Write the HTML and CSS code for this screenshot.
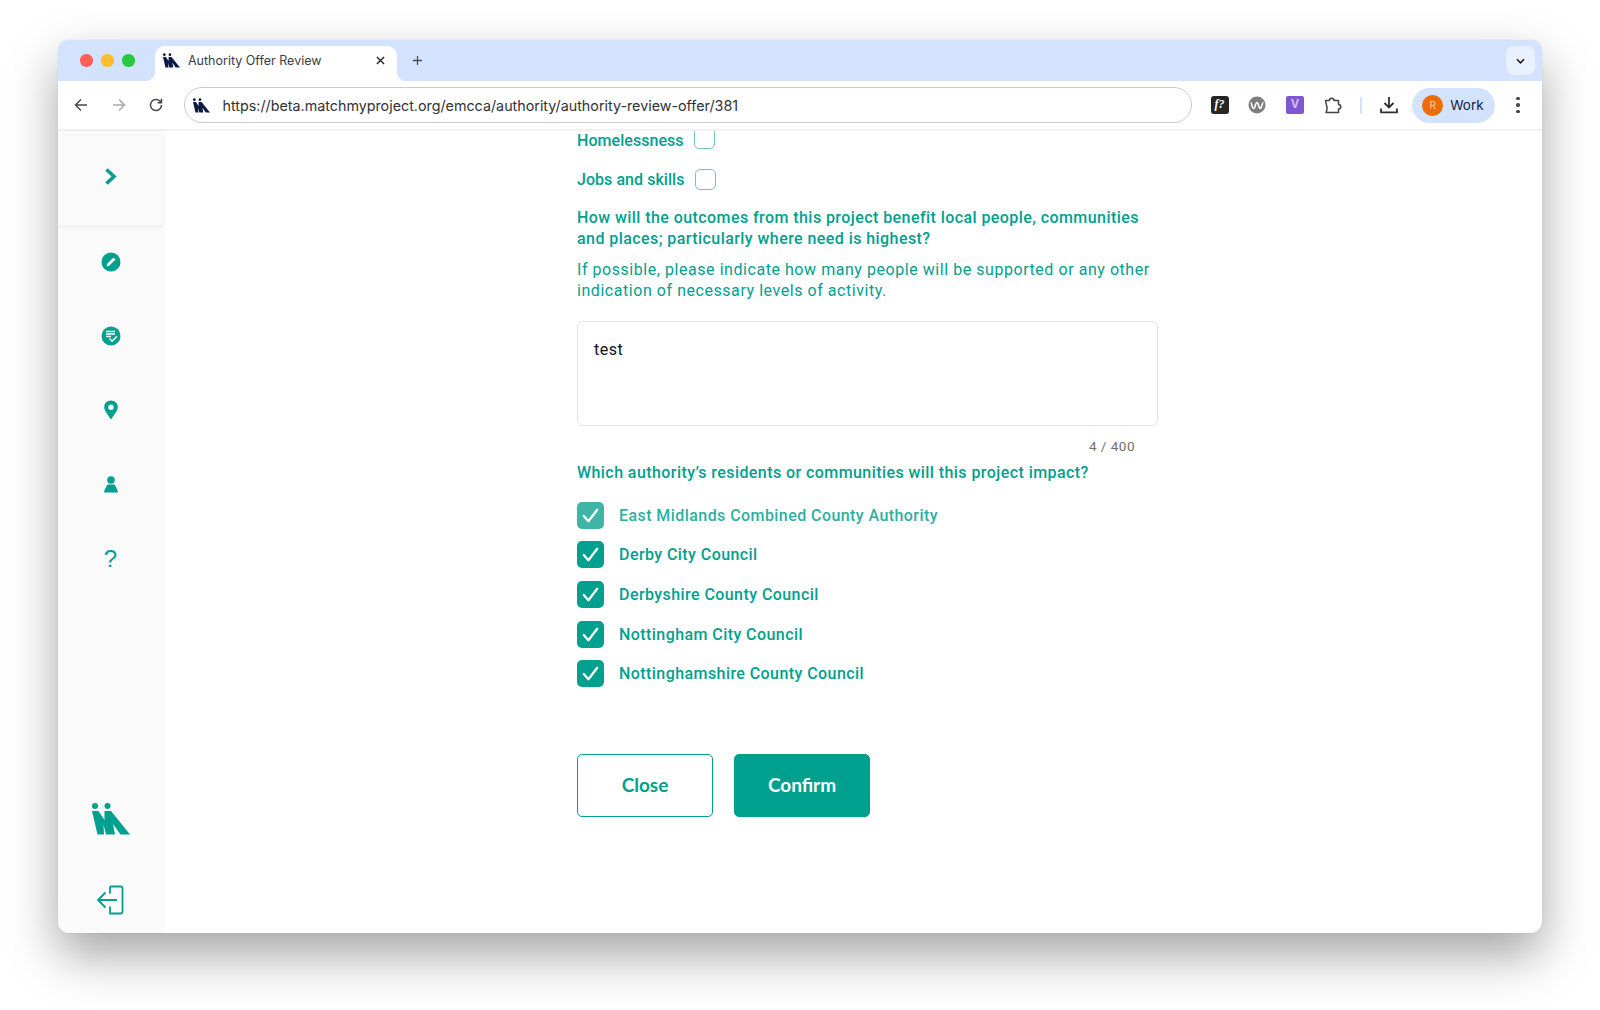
FILE: index.html
```html
<!DOCTYPE html>
<html lang="en">
<head>
<meta charset="utf-8">
<title>Authority Offer Review</title>
<link rel="stylesheet" href="styles.css">
</head>
<body>
<svg class="defs" aria-hidden="true"><defs>
<symbol id="logo" viewBox="0 0 38 32">
<circle cx="3" cy="3" r="3"/><circle cx="15.500" cy="3" r="3"/>
<path d="M0 8h6.500l6 9V8H19l19 23.500h-9.500L21 21l2 10.500h-9l-2.500-10 .5 10H5.500z"/>
</symbol>
<symbol id="check" viewBox="0 0 26 26"><path d="M6.500 13.500l4.500 5 8.500-11" fill="none" stroke="#fff" stroke-width="2.200" stroke-linecap="round" stroke-linejoin="round"/></symbol>
</defs></svg>
<div class="window">
  <header class="tabbar">
    <div class="lights"><i class="red"></i><i class="yellow"></i><i class="green"></i></div>
    <div class="tab">
      <svg class="fav"><use href="#logo"/></svg>
      <span class="tab-title">Authority Offer Review</span>
      <svg class="tab-x" viewBox="0 0 10 10"><path d="M1 1l8 8M9 1l-8 8"/></svg>
    </div>
    <svg class="plus" viewBox="0 0 12 12"><path d="M6 1v10M1 6h10"/></svg>
    <div class="tab-menu"><svg viewBox="0 0 10 6"><path d="M1 1l4 4 4-4"/></svg></div>
  </header>
  <nav class="toolbar">
    <svg class="nav" viewBox="0 0 16 16"><path d="M14 8H2.500M8 2.500L2.500 8 8 13.500"/></svg>
    <svg class="nav off" viewBox="0 0 16 16"><path d="M2 8h11.500M8 2.500L13.500 8 8 13.500"/></svg>
    <svg class="nav" viewBox="0 0 16 16"><path d="M13.500 8A5.500 5.500 0 1 1 11.700 3.900L13.500 5.500M13.500 1.800v3.900H9.600"/></svg>
    <div class="omnibox">
      <svg class="fav"><use href="#logo"/></svg>
      <span class="url">https://beta.matchmyproject.org/emcca/authority/authority-review-offer/381</span>
    </div>
    <div class="ext ext-f">f?</div>
    <svg class="ext" viewBox="0 0 18 18"><circle cx="9" cy="9" r="8.500" fill="#7d7d7d"/><path d="M2.500 6.500c1.500 0 1.500 6 3.200 6s1.500-6 3.300-6 1.500 6 3.300 6 1.500-6 3.200-6" fill="none" stroke="#fff" stroke-width="1.600"/></svg>
    <div class="ext ext-v">V</div>
    <svg class="ext" viewBox="0 0 18 18"><path d="M1.500 4.500h4c0-3 4.500-3 4.500 0h4.500v4c3 0 3 4.500 0 4.500v3.500H2c1-1.500 1-3 1-4.500 0-2-1-4-1.500-7.500z" fill="none" stroke="#444" stroke-width="1.500" stroke-linejoin="round"/></svg>
    <span class="divider"></span>
    <svg class="ext dl" viewBox="0 0 18 18"><path d="M9 1v10M4.500 7L9 11.500 13.500 7" fill="none" stroke="#2f2f33" stroke-width="1.800"/><path d="M1 12.500v3.800h16v-3.800" fill="none" stroke="#2f2f33" stroke-width="1.800" stroke-linejoin="round"/></svg>
    <div class="profile"><span class="avatar">R</span><span class="work">Work</span></div>
    <div class="dots"><i></i><i></i><i></i></div>
  </nav>
  <div class="page">
    <aside class="sidebar">
      <div class="side-top">
        <svg class="chev" viewBox="0 0 12 17"><path d="M1.500 1.500l7.500 7-7.500 7" fill="none" stroke="#00a08e" stroke-width="3.600"/></svg>
      </div>
      <div class="side-icons">
        <svg class="si" viewBox="0 0 20 20"><circle cx="10" cy="10" r="9.500"/><path d="M5.500 14.500l1-3 6-6 2 2-6 6z" fill="#fff"/></svg>
        <svg class="si" viewBox="0 0 20 20"><circle cx="10" cy="10" r="9.500"/><path d="M5 5.500h9M5 8h9M5 10.500h5" stroke="#fff" stroke-width="1.300"/><path d="M8.500 12.500l2.500 2.700 5-5" fill="none" stroke="#fff" stroke-width="1.600"/></svg>
        <svg class="si" viewBox="0 0 20 20"><path fill-rule="evenodd" d="M10 0.500c3.800 0 6.800 2.900 6.800 6.500 0 3.500-3.500 7.500-6.800 12.500C6.700 14.500 3.200 10.500 3.200 7c0-3.600 3-6.500 6.800-6.500zm0 4a2.700 2.700 0 1 0 0 5.400 2.700 2.700 0 0 0 0-5.400z"/></svg>
        <svg class="si" viewBox="0 0 20 20"><circle cx="10" cy="6" r="3.800"/><path d="M7 10.500h6l1 .5 2.800 6v1.500H3.200V17L6 11z"/></svg>
        <span class="help">?</span>
      </div>
      <div class="side-bottom">
        <svg class="side-logo"><use href="#logo"/></svg>
        <svg class="exit" viewBox="0 0 30 30"><path d="M14 1.500h10.500a2 2 0 0 1 2 2v23a2 2 0 0 1-2 2H14v-7M14 8.500v-7M21 15H2M9.500 7.500L2 15l7.500 7.500" fill="none" stroke="#00a08e" stroke-width="1.800"/></svg>
      </div>
    </aside>
    <main class="main">
      <div class="form">
        <div class="inline-row first"><span class="q">Homelessness</span><span class="box"></span></div>
        <div class="inline-row"><span class="q">Jobs and skills</span><span class="box"></span></div>
        <p class="q para">How will the outcomes from this project benefit local people, communities and places; particularly where need is highest?</p>
        <p class="hint">If possible, please indicate how many people will be supported or any other indication of necessary levels of activity.</p>
        <div class="textarea">test</div>
        <div class="counter">4 / 400</div>
        <p class="q which">Which authority’s residents or communities will this project impact?</p>
        <ul class="checks">
          <li class="faded"><span class="cb"><svg><use href="#check"/></svg></span><span class="q">East Midlands Combined County Authority</span></li>
          <li><span class="cb"><svg><use href="#check"/></svg></span><span class="q">Derby City Council</span></li>
          <li><span class="cb"><svg><use href="#check"/></svg></span><span class="q">Derbyshire County Council</span></li>
          <li><span class="cb"><svg><use href="#check"/></svg></span><span class="q">Nottingham City Council</span></li>
          <li><span class="cb"><svg><use href="#check"/></svg></span><span class="q">Nottinghamshire County Council</span></li>
        </ul>
        <div class="actions">
          <button class="btn ghost" type="button">Close</button>
          <button class="btn solid" type="button">Confirm</button>
        </div>
      </div>
    </main>
  </div>
</div>
</body>
</html>
```
FILE: styles.css
```css
* { box-sizing: border-box; }
html, body { margin: 0; height: 100%; }
body {
  background: #fff;
  padding: 40px 58px 0;
  font-family: Roboto, "Liberation Sans", sans-serif;
  overflow: hidden;
}
.defs { width: 0; height: 0; position: absolute; }
.window {
  width: 1484px;
  height: 893px;
  border-radius: 11px;
  overflow: hidden;
  background: #fff;
  box-shadow: 0 0 1px rgba(0,0,0,.25), 0 22px 50px rgba(0,0,0,.36);
  display: flex;
  flex-direction: column;
}
.tabbar {
  height: 41px;
  flex: none;
  background: #d3e3fd;
  display: flex;
  align-items: flex-end;
  padding-left: 22px;
  position: relative;
}
.lights { display: flex; gap: 8.500px; align-self: center; width: 75px; }
.lights i { width: 12.500px; height: 12.500px; border-radius: 50%; display: block; }
.red { background: #ff5f57; }
.yellow { background: #febc2e; }
.green { background: #28c840; }
.tab {
  width: 242px;
  height: 35px;
  background: #fff;
  border-radius: 10px 10px 0 0;
  display: flex;
  align-items: center;
  padding: 0 0 6px 8px;
  position: relative;
}
.tab::before, .tab::after {
  content: "";
  position: absolute;
  bottom: 0;
  width: 10px;
  height: 10px;
}
.tab::before { left: -10px; background: radial-gradient(circle at 0 0, #d3e3fd 10px, #fff 10.500px); }
.tab::after { right: -10px; background: radial-gradient(circle at 100% 0, #d3e3fd 10px, #fff 10.500px); }
.fav { width: 17px; height: 15px; fill: #0c1a45; flex: none; }
.tab-title { font: 12.500px "Inter", "Liberation Sans", sans-serif; color: #3a3d42; margin-left: 8px; flex: 1; }
.tab-x { width: 9px; height: 9px; stroke: #222; stroke-width: 1.500; fill: none; margin-right: 12px; }
.plus { width: 11px; height: 11px; stroke: #4a4d52; stroke-width: 1.400; fill: none; margin: 0 0 15px 15px; }
.tab-menu {
  position: absolute;
  right: 7px;
  top: 6px;
  width: 29px;
  height: 29px;
  background: #e9f0fe;
  border-radius: 8px;
  display: flex;
  align-items: center;
  justify-content: center;
}
.tab-menu svg { width: 9px; height: 6px; stroke: #1d1d1f; stroke-width: 1.700; fill: none; }
.toolbar {
  height: 50px;
  flex: none;
  background: #fff;
  border-bottom: 2px solid #f1f1f2;
  display: flex;
  align-items: center;
  padding-left: 15px;
}
.nav { width: 16px; height: 16px; fill: none; stroke: #46494e; stroke-width: 1.500; margin-right: 21.500px; flex: none; }
.nav.off { stroke: #a6a8ab; }
.omnibox {
  width: 1008px;
  height: 36px;
  border: 1px solid #c9cacc;
  border-radius: 18px;
  display: flex;
  align-items: center;
  padding-left: 8px;
  margin-left: -2px;
  margin-right: 19px;
  flex: none;
}
.url { font: 14.300px "Inter", "Liberation Sans", sans-serif; color: #303236; margin-left: 13px; white-space: nowrap; }
.ext { width: 18px; height: 18px; flex: none; margin-right: 19.800px; }
.ext-f {
  background: #262626;
  color: #fff;
  border-radius: 3px;
  font: italic bold 12px/17px "Liberation Serif", serif;
  text-align: center;
}
.ext-v {
  background: #7e57d1;
  color: #d9c8fb;
  border-radius: 2px;
  font: bold 12px/17px "Liberation Sans", sans-serif;
  text-align: center;
}
.divider { width: 2px; height: 17px; background: #d3e3fd; margin: 0 18px 0 -1.500px; flex: none; }
.dl { margin-right: 14px; }
.profile {
  width: 83px;
  height: 35px;
  border-radius: 18px;
  background: #d3e3fd;
  display: flex;
  align-items: center;
  padding-left: 10px;
  flex: none;
}
.avatar {
  width: 21px;
  height: 21px;
  border-radius: 50%;
  background: #ee6c00;
  color: #ffd9bd;
  font: 10px/21px "Inter", sans-serif;
  text-align: center;
}
.work { font: 13.500px "Inter", "Liberation Sans", sans-serif; color: #14213d; margin-left: 7px; }
.dots { margin-left: 21px; display: flex; flex-direction: column; gap: 3px; }
.dots i { width: 3.500px; height: 3.500px; border-radius: 50%; background: #43464b; display: block; }
.page { flex: 1; display: flex; min-height: 0; }
.sidebar {
  width: 105px;
  flex: none;
  background: #fafafa;
  box-shadow: 1px 0 3px rgba(0,0,0,.03);
  display: flex;
  flex-direction: column;
}
.side-top {
  height: 94px;
  flex: none;
  display: flex;
  align-items: center;
  justify-content: center;
  box-shadow: 0 2px 5px rgba(0,0,0,.05);
  padding-bottom: 4px;
}
.chev { width: 12px; height: 17px; }
.side-icons {
  display: flex;
  flex-direction: column;
  align-items: center;
  gap: 54px;
  padding-top: 27px;
  flex: 1;
}
.si { width: 20px; height: 20px; fill: #00a08e; flex: none; }
.help { font: 24px/22px "Liberation Sans", sans-serif; color: #00a08e; height: 20px; }
.side-bottom { display: flex; flex-direction: column; align-items: center; gap: 50px; padding-bottom: 18px; }
.side-logo { width: 38px; height: 32px; fill: #00a08e; }
.exit { width: 30px; height: 30px; }
.main { flex: 1; overflow: hidden; padding-left: 414px; }
.form { width: 581px; }
.q, .hint { font-size: 16px; line-height: 21px; color: #00a08e; font-weight: 500; letter-spacing: .43px; margin: 0; }
.hint { font-weight: 400; letter-spacing: .55px; margin-top: 10px; }
.inline-row { display: flex; align-items: center; gap: 10px; height: 21px; margin-top: 18px; }
.inline-row .q { letter-spacing: .05px; }
.inline-row.first { margin-top: -1px; }
.box { width: 21px; height: 21px; border: 1px solid #6fc6bc; border-radius: 5px; display: block; }
.first .box { position: relative; top: -2px; }
.para { margin-top: 17px; }
.textarea {
  margin-top: 20px;
  height: 105px;
  border: 1px solid #e4e4e4;
  border-radius: 6px;
  padding: 18px 16px;
  font-size: 16px;
  line-height: 20px;
  font-weight: 400;
  letter-spacing: .5px;
  color: #111;
}
.counter { text-align: right; padding-right: 23px; margin-top: 12px; font-size: 13.500px; line-height: 16px; letter-spacing: .5px; color: #6f6f6f; }
.which { margin-top: 8px; }
.checks { list-style: none; margin: 19px 0 0; padding: 0; display: flex; flex-direction: column; gap: 13px; }
.checks li { display: flex; align-items: center; gap: 15px; height: 26.600px; }
.cb { width: 27px; height: 27px; border-radius: 5px; background: #00a08e; display: block; flex: none; }
.cb svg { width: 27px; height: 27px; display: block; }
.faded .cb { background: #3fb5a7; }
.faded .q { color: #2eaf9f; font-weight: 500; }
.actions { display: flex; gap: 21px; margin-top: 67px; }
.btn { width: 136px; height: 63px; border-radius: 5px; font: 700 19px Lato, sans-serif; padding: 0 0 2px; cursor: pointer; }
.ghost { background: #fff; color: #00a08e; border: 1px solid #00a08e; }
.solid { background: #00a08e; color: #fff; border: 1px solid #00a08e; }
```
